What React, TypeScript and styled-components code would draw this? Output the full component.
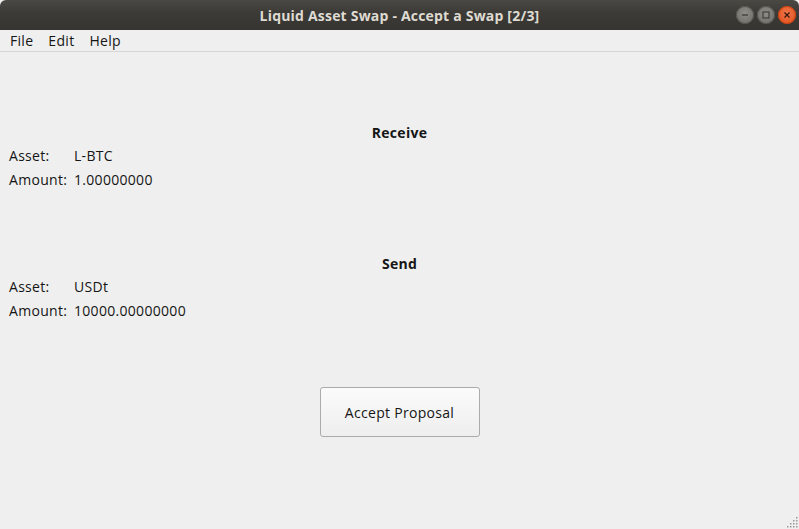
import React from 'react';
import styled, {createGlobalStyle} from "styled-components";

const Global = createGlobalStyle`
  html, body {
    margin: 0;
    padding: 0;
    background: #efefef;
  }
  body {
    font-family: "Open Sans", "DejaVu Sans", sans-serif;
    font-size: 14px;
    letter-spacing: 0.3px;
    color: #151515;
  }
`

const Window = styled.div`
  width: 799px;
  height: 529px;
  display: flex;
  flex-direction: column;
  background: #efefef;
  overflow: hidden;
  position: relative;
`

const TitleBar = styled.div`
  height: 30px;
  flex: none;
  display: flex;
  align-items: center;
  justify-content: center;
  position: relative;
  background: linear-gradient(#4a4944, #3c3b37 40%, #353430);
  border-radius: 6px 6px 0 0;
  color: #dfdbd2;
  font-weight: 700;
  font-size: 14px;
  letter-spacing: 0.2px;
`

const WinButtons = styled.div`
  position: absolute;
  right: 3px;
  top: 6px;
  display: flex;
  gap: 3px;
`

const WinBtn = styled.div<{ $close?: boolean }>`
  width: 18px;
  height: 18px;
  border-radius: 50%;
  display: flex;
  align-items: center;
  justify-content: center;
  background: ${p => p.$close
    ? 'radial-gradient(circle at 50% 40%, #f0764a, #df4a16)'
    : 'radial-gradient(circle at 50% 40%, #8f8d87, #6a6863)'};
  box-shadow: inset 0 0 0 1px ${p => p.$close ? '#c2410f' : '#55534e'};
`

const MenuBar = styled.div`
  height: 21px;
  flex: none;
  display: flex;
  align-items: center;
  padding: 0 0 0 10px;
  gap: 15px;
  border-bottom: 1px solid #d6d6d6;
  font-size: 14px;
`

const MenuItem = styled.span`
  line-height: 21px;
`

const Body = styled.div`
  flex: 1;
  display: flex;
  flex-direction: column;
  padding: 70px 9px 0 9px;
`

const Section = styled.div`
  display: flex;
  flex-direction: column;
  margin-bottom: 61px;
`

const Heading = styled.div`
  text-align: center;
  font-weight: 700;
  line-height: 22px;
  height: 22px;
`

const Row = styled.div`
  display: grid;
  grid-template-columns: 65px 1fr;
  line-height: 24px;
`

const ButtonRow = styled.div`
  display: flex;
  justify-content: center;
  margin-top: 3px;
`

const Button = styled.button`
  width: 160px;
  height: 50px;
  border: 1px solid #ababab;
  border-radius: 3px;
  background: linear-gradient(#fbfbfb, #eeeeee);
  font-family: inherit;
  font-size: 14px;
  letter-spacing: 0.3px;
  color: #151515;
  cursor: pointer;
`

const Grip = styled.svg`
  position: absolute;
  right: 1px;
  bottom: 1px;
`

const Close = () => (
    <svg width="8" height="8" viewBox="0 0 8 8">
        <path d="M1.5 1.5 L6.5 6.5 M6.5 1.5 L1.5 6.5" stroke="#3a1a0c" strokeWidth="1.3"/>
    </svg>
)

const Minimize = () => (
    <svg width="8" height="8" viewBox="0 0 8 8">
        <path d="M1 4 H7" stroke="#3c3b37" strokeWidth="1.3"/>
    </svg>
)

const Maximize = () => (
    <svg width="8" height="8" viewBox="0 0 8 8">
        <rect x="1" y="1" width="6" height="6" fill="none" stroke="#3c3b37" strokeWidth="1.1"/>
    </svg>
)

const swaps = [
    {title: 'Receive', asset: 'L-BTC', amount: '1.00000000'},
    {title: 'Send', asset: 'USDt', amount: '10000.00000000'},
]

const App = () => {
    return (
        <Window>
            <Global/>
            <TitleBar>
                Liquid Asset Swap - Accept a Swap [2/3]
                <WinButtons>
                    <WinBtn><Minimize/></WinBtn>
                    <WinBtn><Maximize/></WinBtn>
                    <WinBtn $close><Close/></WinBtn>
                </WinButtons>
            </TitleBar>
            <MenuBar>
                <MenuItem>File</MenuItem>
                <MenuItem>Edit</MenuItem>
                <MenuItem>Help</MenuItem>
            </MenuBar>
            <Body>
                {swaps.map(s => (
                    <Section key={s.title}>
                        <Heading>{s.title}</Heading>
                        <Row><span>Asset:</span><span>{s.asset}</span></Row>
                        <Row><span>Amount:</span><span>{s.amount}</span></Row>
                    </Section>
                ))}
                <ButtonRow>
                    <Button>Accept Proposal</Button>
                </ButtonRow>
            </Body>
            <Grip width="12" height="12" viewBox="0 0 12 12">
                {[[10, 1], [7, 4], [10, 4], [4, 7], [7, 7], [10, 7], [1, 10], [4, 10], [7, 10], [10, 10]].map(([x, y]) => (
                    <rect key={`${x}-${y}`} x={x} y={y} width="1.5" height="1.5" fill="#9a9a9a"/>
                ))}
            </Grip>
        </Window>
    );
};

export default App;
